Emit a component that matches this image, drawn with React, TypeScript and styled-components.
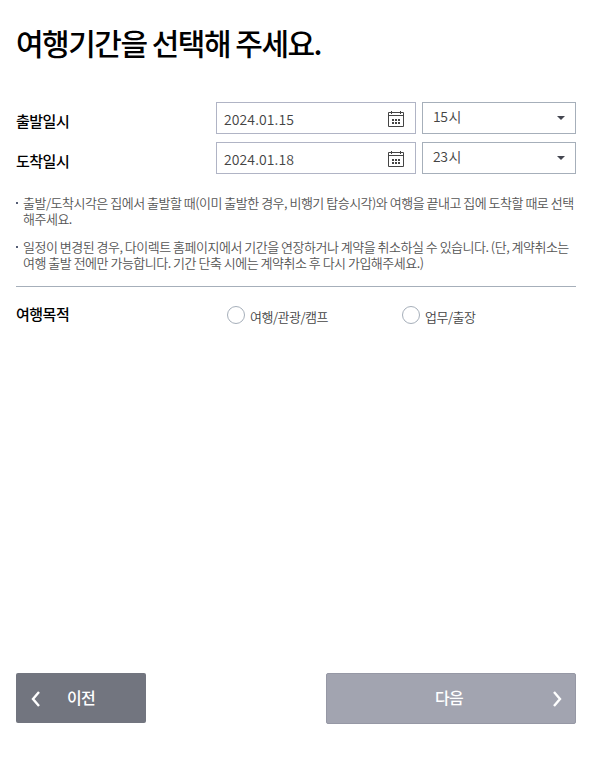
import React from "react";
import styled, { createGlobalStyle } from "styled-components";

const Global = createGlobalStyle`
  *{box-sizing:border-box}
  body{margin:0;background:#fff;color:#000;font-family:"Noto Sans CJK KR","Noto Sans",sans-serif;}
`;
const Page = styled.main`height:768px;padding:22px 32px 44px 16px;display:flex;flex-direction:column;overflow:hidden;`;
const Title = styled.h1`margin:0 0 39px;font-size:30px;line-height:41px;font-weight:500;letter-spacing:-1.5px;white-space:nowrap;`;
const Row = styled.div`display:grid;grid-template-columns:194px 200px 154px;column-gap:6px;height:32px;margin-bottom:8px;`;
const Label = styled.div`font-size:15px;line-height:20px;font-weight:500;letter-spacing:-0.5px;padding-top:9px;white-space:nowrap;`;
const DateField = styled.div`border:1px solid #b0b4c5;display:flex;justify-content:space-between;padding:5px 10px 0 7px;font-size:14px;font-weight:350;line-height:22px;letter-spacing:0.1px;color:#444;`;
const SelectField = styled(DateField)`border-color:#a6afba;padding:2px 10px 0;letter-spacing:-0.5px;`;
const Hour = styled.span`display:flex;gap:1px;`;
const Arrow = styled.span`width:0;height:0;border:4px solid transparent;border-top-color:#444650;border-bottom:0;margin-top:11px;`;
const Notes = styled.ul`list-style:none;margin:13px 0 0;padding:0 0 15px;border-bottom:1px solid #a6afba;`;
const Note = styled.li`display:flex;font-size:13px;font-weight:350;line-height:16px;letter-spacing:-0.5px;color:#555;white-space:pre;margin-bottom:12px;&:last-child{margin:0}&::before{content:"";width:2px;height:2px;background:#555d75;margin:7px 5px 0 0;}`;
const Purpose = styled.div`display:grid;grid-template-columns:211px 175px 1fr;padding-top:17px;`;
const PurposeLabel = styled(Label)`padding:0;`;
const Option = styled.label`display:flex;align-items:flex-start;gap:5px;font-size:13px;font-weight:350;line-height:18px;letter-spacing:-0.5px;color:#444;white-space:nowrap;padding-top:2px;`;
const Radio = styled.span`width:18px;height:18px;border:1px solid #a6afba;border-radius:50%;`;
const OptionText = styled.span`padding-top:2px;`;
const Footer = styled.footer`display:flex;justify-content:space-between;align-items:flex-start;margin-top:auto;`;
const Button = styled.button<{$next?:boolean}>`border:${p=>p.$next?"1px solid #9698a5":"0"};background:${p=>p.$next?"#a2a4b0":"#72757f"};width:${p=>p.$next?250:130}px;height:${p=>p.$next?51:50}px;padding:${p=>p.$next?"0 12px":"0 14px"};border-radius:2px;color:#fff;font:500 16px/22px "Noto Sans CJK KR",sans-serif;letter-spacing:-0.8px;display:grid;grid-template-columns:12px 1fr 12px;align-items:center;text-align:center;`;
const ButtonText = styled.span<{$next?:boolean}>`margin:${p=>p.$next?-3:-2}px 0 0 ${p=>p.$next?-4:0}px;`;

const Calendar = () => <svg width="17" height="20" viewBox="0 0 17 20"><path d="M.5 4.5h15v14H.5zM.5 7.5h15M3.5 3v3M12.5 3v3" fill="none" stroke="#444"/><path d="M4 11h2v2H4zM7 11h2v2H7zM10 11h2v2h-2zM4 14h2v2H4zM7 14h2v2H7zM10 14h2v2h-2z" fill="#444"/></svg>;
const Chevron = ({next=false}) => <svg width="12" height="18" viewBox="0 0 12 18" fill="none" stroke="#fff" strokeWidth="2.4"><path d={next?"M3 2l6 7-6 7":"M9 3L3 10l6 7"}/></svg>;

export default function App(){
  return <><Global/><Page>
    <Title>여행기간을 선택해 주세요.</Title>
    {[["출발일시","2024.01.15","15"],["도착일시","2024.01.18","23"]].map(([l,d,t])=><Row key={l}><Label>{l}</Label><DateField><span>{d}</span><Calendar/></DateField><SelectField><Hour><span>{t}</span><span>시</span></Hour><Arrow/></SelectField></Row>)}
    <Notes>
      <Note>{"출발/도착시각은 집에서 출발할 때(이미 출발한 경우, 비행기 탑승시각)와 여행을 끝내고 집에 도착할 때로 선택\n해주세요."}</Note>
      <Note>{"일정이 변경된 경우, 다이렉트 홈페이지에서 기간을 연장하거나 계약을 취소하실 수 있습니다. (단, 계약취소는\n여행 출발 전에만 가능합니다. 기간 단축 시에는 계약취소 후 다시 가입해주세요.)"}</Note>
    </Notes>
    <Purpose><PurposeLabel>여행목적</PurposeLabel>{["여행/관광/캠프","업무/출장"].map(t=><Option key={t}><Radio/><OptionText>{t}</OptionText></Option>)}</Purpose>
    <Footer><Button><Chevron/><ButtonText>이전</ButtonText></Button><Button $next><i/><ButtonText $next>다음</ButtonText><Chevron next/></Button></Footer>
  </Page></>;
}
